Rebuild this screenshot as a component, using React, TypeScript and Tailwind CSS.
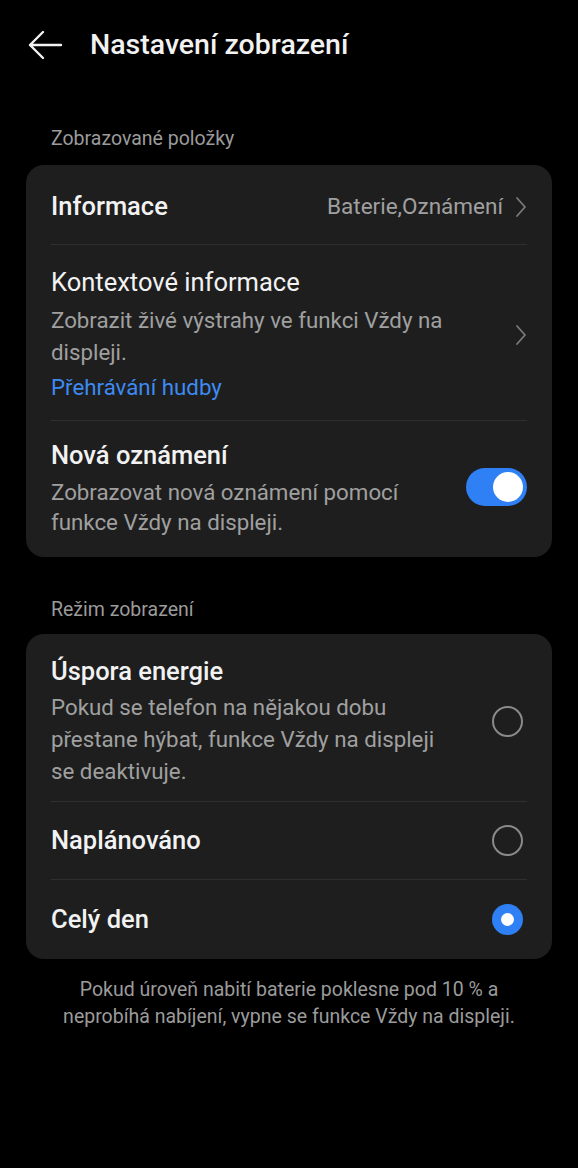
import React from "react";

const font = { fontFamily: "Roboto, 'Noto Sans', sans-serif" };

function Chevron() {
  return (
    <svg width="12" height="22" viewBox="0 0 12 22" fill="none">
      <path d="M2 2 L10 11 L2 20" stroke="#7a7a7a" strokeWidth="1.8" strokeLinecap="round" strokeLinejoin="round" />
    </svg>
  );
}

function Radio({ checked }: { checked?: boolean }) {
  if (checked) {
    return (
      <div className="mr-[4px] w-[31px] h-[31px] rounded-full bg-[#2f7ff5] flex items-center justify-center">
        <div className="w-[13px] h-[13px] rounded-full bg-white" />
      </div>
    );
  }
  return <div className="mr-[4px] w-[31px] h-[31px] rounded-full border-2 border-[#8a8a8a]" />;
}

function Divider() {
  return <div className="mx-[25px] h-px bg-[#2f2f2f]" />;
}

export default function App() {
  return (
    <div className="w-[578px] h-[1168px] bg-black text-[#f2f2f2]" style={font}>
      <div className="h-[90px] flex items-center">
        <div className="ml-[27px] w-[36px] flex items-center">
          <svg width="36" height="32" viewBox="0 0 36 32" fill="none">
            <path d="M34 16 H3 M16 3 L3 16 L16 29" stroke="#f2f2f2" strokeWidth="2.4" strokeLinecap="round" strokeLinejoin="round" />
          </svg>
        </div>
        <div className="ml-[27px] text-[28.5px] font-medium leading-none">Nastavení zobrazení</div>
      </div>

      <div className="pt-[37px] px-[51px] text-[19.5px] leading-[24px] text-[#9b9b9b]">Zobrazované položky</div>

      <div className="mt-[14px] mx-[26px] rounded-[18px] bg-[#1e1e1e]">
        <div className="h-[79px] pt-[4px] px-[25px] flex items-center justify-between">
          <div className="text-[25.5px] font-medium">Informace</div>
          <div className="flex items-center gap-[12px]">
            <span className="text-[22.5px] text-[#a0a0a0]">Baterie,Oznámení</span>
            <Chevron />
          </div>
        </div>
        <Divider />
        <div className="px-[25px] pt-[21px] pb-[17px] flex items-center justify-between">
          <div className="flex flex-col w-[420px]">
            <div className="text-[25.5px] leading-[32px]">Kontextové informace</div>
            <div className="mt-[6px] text-[22.3px] leading-[32px] text-[#a0a0a0]">
              Zobrazit živé výstrahy ve funkci Vždy na displeji.
            </div>
            <div className="mt-[3px] text-[22.3px] leading-[32px] text-[#3d8bf2]">Přehrávání hudby</div>
          </div>
          <Chevron />
        </div>
        <Divider />
        <div className="px-[25px] pt-[18px] pb-[20px] flex items-center justify-between">
          <div className="flex flex-col w-[385px]">
            <div className="text-[25.5px] font-medium leading-[32px]">Nová oznámení</div>
            <div className="mt-[6px] text-[22.3px] leading-[30px] text-[#a0a0a0]">
              Zobrazovat nová oznámení pomocí funkce Vždy na displeji.
            </div>
          </div>
          <div className="-mt-[3px] w-[61px] h-[38px] rounded-full bg-[#2f7ff5] flex items-center justify-end pr-[4px]">
            <div className="w-[30px] h-[30px] rounded-full bg-white" />
          </div>
        </div>
      </div>

      <div className="pt-[41px] px-[51px] text-[19.5px] leading-[24px] text-[#9b9b9b]">Režim zobrazení</div>

      <div className="mt-[12px] mx-[26px] rounded-[18px] bg-[#1e1e1e]">
        <div className="px-[25px] pt-[21px] pb-[14px] flex items-center justify-between">
          <div className="flex flex-col w-[400px]">
            <div className="text-[25.5px] font-medium leading-[32px]">Úspora energie</div>
            <div className="mt-[4px] text-[22.3px] leading-[32px] text-[#a0a0a0]">
              Pokud se telefon na nějakou dobu přestane hýbat, funkce Vždy na displeji se deaktivuje.
            </div>
          </div>
          <Radio />
        </div>
        <Divider />
        <div className="h-[77px] px-[25px] flex items-center justify-between">
          <div className="text-[25.5px] font-medium">Naplánováno</div>
          <Radio />
        </div>
        <Divider />
        <div className="h-[79px] px-[25px] flex items-center justify-between">
          <div className="text-[25.5px] font-medium">Celý den</div>
          <Radio checked />
        </div>
      </div>

      <div className="mt-[17px] px-[59px] text-center text-[19.5px] leading-[27px] text-[#9b9b9b]">
        Pokud úroveň nabití baterie poklesne pod 10 % a neprobíhá nabíjení, vypne se funkce Vždy na displeji.
      </div>
    </div>
  );
}
